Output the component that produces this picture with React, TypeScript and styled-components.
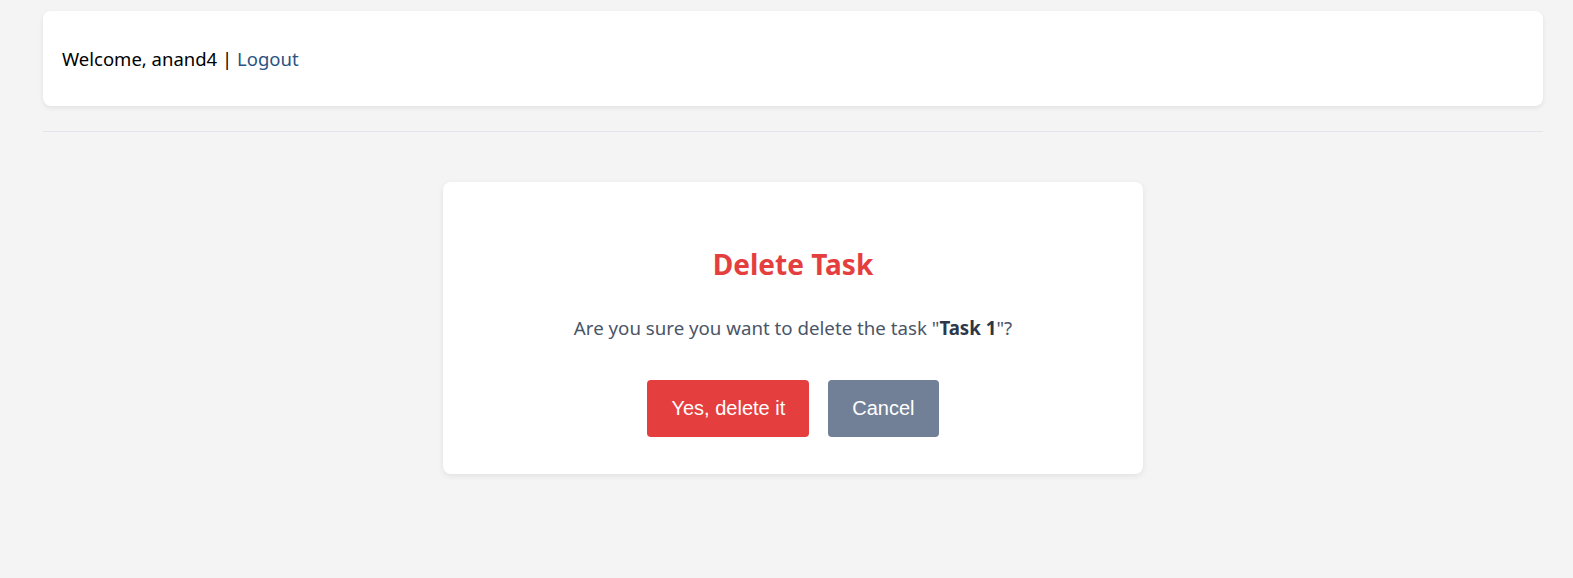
import styled, { createGlobalStyle } from 'styled-components';

const GlobalStyle = createGlobalStyle`
  body {
    margin: 0;
    background-color: #f4f4f4;
    font-family: "Noto Sans", "Open Sans", sans-serif;
  }
`;

const Page = styled.div`
  padding: 11px 30px 40px 43px;
  min-height: 578px;
  box-sizing: border-box;
`;

const HeaderCard = styled.header`
  height: 95px;
  background: #ffffff;
  border-radius: 8px;
  box-shadow: 0 2px 5px rgba(0, 0, 0, 0.08);
  display: flex;
  align-items: center;
  padding: 0 19px;
  box-sizing: border-box;
  font-size: 18.5px;
  color: #000000;
`;

const LogoutLink = styled.a`
  color: #2c5282;
  text-decoration: none;
  cursor: pointer;
`;

const Divider = styled.hr`
  border: none;
  border-top: 1px solid #e2e5ea;
  margin: 25px 0 0;
`;

const Modal = styled.section`
  width: 700px;
  margin: 50px auto 0;
  background: #ffffff;
  border-radius: 8px;
  box-shadow: 0 2px 6px rgba(0, 0, 0, 0.08);
  padding: 64px 40px 37px;
  box-sizing: border-box;
  text-align: center;
`;

const Title = styled.h2`
  margin: 0;
  font-size: 28px;
  font-weight: 700;
  line-height: 36px;
  color: #e53e3e;
`;

const Message = styled.p`
  margin: 33px 0 0;
  font-size: 18.7px;
  line-height: 26px;
  color: #4a5568;

  strong {
    color: #2d3748;
  }
`;

const Actions = styled.div`
  display: flex;
  justify-content: center;
  gap: 19px;
  margin-top: 39px;
`;

const Button = styled.button<{ $variant: 'danger' | 'neutral' }>`
  font-family: "Liberation Sans", Arial, sans-serif;
  font-size: 20px;
  line-height: 23px;
  padding: 17px 24px;
  border: none;
  border-radius: 4px;
  color: #ffffff;
  cursor: pointer;
  background-color: ${(p) => (p.$variant === 'danger' ? '#e53e3e' : '#718096')};
`;

export default function App() {
  return (
    <>
      <GlobalStyle />
      <Page>
        <HeaderCard>
          <span>
            Welcome, anand4 | <LogoutLink>Logout</LogoutLink>
          </span>
        </HeaderCard>
        <Divider />
        <Modal>
          <Title>Delete Task</Title>
          <Message>
            Are you sure you want to delete the task "<strong>Task 1</strong>"?
          </Message>
          <Actions>
            <Button $variant="danger">Yes, delete it</Button>
            <Button $variant="neutral">Cancel</Button>
          </Actions>
        </Modal>
      </Page>
    </>
  );
}
